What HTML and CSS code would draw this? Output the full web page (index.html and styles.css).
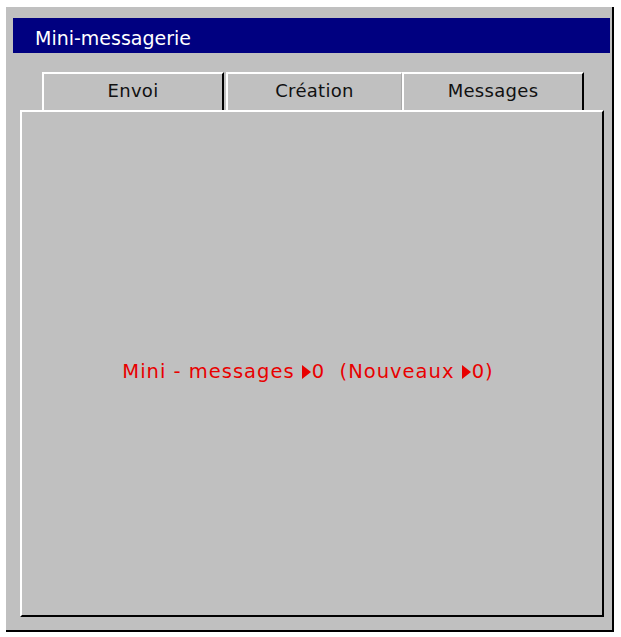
FILE: index.html
```html
<!DOCTYPE html>
<html lang="fr">
<head>
  <meta charset="UTF-8">
  <title>Mini-messagerie</title>
  <meta name="viewport" content="width=device-width, initial-scale=1">
  <link rel="stylesheet" href="styles.css">
</head>
<body>
  <div class="window">
    <div class="titlebar">Mini-messagerie</div>
    <div class="tabs">
      <div class="tab tab-envoi">Envoi</div>
      <div class="tab tab-creation">Création</div>
      <div class="tab tab-messages">Messages</div>
    </div>
    <div class="panel">
      <div class="counter">Mini - messages <span class="arrow"></span>0  (Nouveaux <span class="arrow"></span>0)</div>
    </div>
  </div>
</body>
</html>
```

FILE: styles.css
```css
:root {
  --face: #c0c0c0;
  --navy: #000080;
  --light: #fff;
  --dark: #000;
  --red: #e80000;
}
body {
  margin: 0;
  background: #fff;
  font-family: 'DejaVu Sans', 'Liberation Sans', sans-serif;
}
.window {
  box-sizing: border-box;
  margin: 7px 0 0 6px;
  width: 608px;
  height: 625px;
  background: var(--face);
  border-right: 2px solid var(--dark);
  border-bottom: 2px solid var(--dark);
  padding: 11px 2px 0 7px;
}
.titlebar {
  height: 35px;
  box-sizing: border-box;
  background: var(--navy);
  color: #fff;
  font-size: 19px;
  line-height: 35px;
  padding: 3px 0 0 22px;
}
.tabs {
  display: flex;
  margin: 19px 0 0 29px;
  height: 38px;
}
.tab {
  box-sizing: border-box;
  border-top: 2px solid var(--light);
  border-left: 2px solid var(--light);
  border-right: 2px solid var(--dark);
  font-size: 18px;
  letter-spacing: 0.3px;
  color: #111;
  text-align: center;
  line-height: 34px;
}
.tab-envoi {
  width: 182px;
  margin-right: 2px;
}
.tab-creation {
  width: 176px;
  border-right: 1px solid #a8a8a8;
}
.tab-messages {
  width: 182px;
}
.panel {
  box-sizing: border-box;
  margin-left: 7px;
  width: 584px;
  height: 507px;
  border-top: 2px solid var(--light);
  border-left: 2px solid var(--light);
  border-right: 2px solid var(--dark);
  border-bottom: 2px solid var(--dark);
  display: flex;
  align-items: center;
  justify-content: center;
  padding: 16px 8px 0 0;
}
.counter {
  color: var(--red);
  font-size: 19.5px;
  letter-spacing: 1px;
  white-space: pre;
}
.arrow {
  display: inline-block;
  width: 0;
  height: 0;
  border-left: 9px solid var(--red);
  border-top: 7px solid transparent;
  border-bottom: 7px solid transparent;
  vertical-align: -1px;
  margin-right: 1px;
}
```
